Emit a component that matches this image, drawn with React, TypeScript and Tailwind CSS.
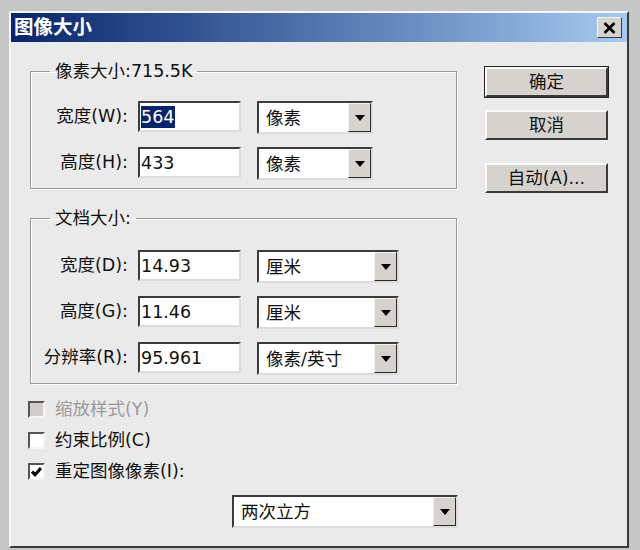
import React from 'react';

const FONT = { fontFamily: '"DejaVu Sans", "Noto Sans CJK SC", sans-serif' };

const Arrow: React.FC = () => (
  <svg width="10" height="6" viewBox="0 0 10 6">
    <path d="M0 0 H10 L5 6 Z" fill="#000" />
  </svg>
);

const TextBox: React.FC<{ value: string; selected?: boolean }> = ({ value, selected }) => (
  <div className="w-[103px] h-[31px] bg-white border-2 border-t-[#3c3c3c] border-l-[#3c3c3c] border-b-[#dcdcdc] border-r-[#dcdcdc] flex items-center pl-[1px] pt-[1px]">
    {selected ? (
      <span className="bg-[#0a246a] text-white leading-[22px] pr-[1px]">{value}</span>
    ) : (
      <span className="text-[#111] leading-[22px]">{value}</span>
    )}
  </div>
);

const Select: React.FC<{ value: string; width: string }> = ({ value, width }) => (
  <div className={`${width} h-[33px] bg-white border-2 border-t-[#3c3c3c] border-l-[#3c3c3c] border-b-[#dcdcdc] border-r-[#dcdcdc] flex`}>
    <div className="flex-1 flex items-center pl-[7px] pt-[2px] text-[#111]">{value}</div>
    <div className="w-[23px] h-full bg-[#d6d3ce] border border-t-[#f2f2f2] border-l-[#f2f2f2] border-r-[#2a2a2a] border-b-[#2a2a2a] flex items-center justify-center">
      <Arrow />
    </div>
  </div>
);

const Row: React.FC<{ label: string; value: string; unit: string; selWidth: string; selected?: boolean }> = ({
  label,
  value,
  unit,
  selWidth,
  selected,
}) => (
  <div className="flex items-center h-[31px]">
    <div className="w-[98px] text-right pr-[1px] text-[#111] whitespace-nowrap">{label}</div>
    <div className="ml-[9px]">
      <TextBox value={value} selected={selected} />
    </div>
    <div className="ml-[16px] mt-[2px]">
      <Select value={unit} width={selWidth} />
    </div>
  </div>
);

const Button: React.FC<{ label: string; isDefault?: boolean }> = ({ label, isDefault }) => (
  <button
    className={`w-[123px] h-[30px] bg-[#d6d3ce] border-2 border-t-[#fafafa] border-l-[#fafafa] border-r-[#3a3a3a] border-b-[#3a3a3a] text-[#111] flex items-center justify-center pt-[1px] ${
      isDefault ? 'outline outline-1 outline-[#222]' : ''
    }`}
  >
    {label}
  </button>
);

const CheckBox: React.FC<{ label: string; checked?: boolean; disabled?: boolean }> = ({ label, checked, disabled }) => (
  <div className="flex items-center h-[17px]">
    <div
      className={`w-[17px] h-[17px] border-2 border-t-[#555] border-l-[#555] border-b-[#f4f4f4] border-r-[#f4f4f4] flex items-center justify-center ${
        disabled ? 'bg-[#d0cdc8]' : 'bg-white'
      }`}
    >
      {checked && (
        <svg width="11" height="10" viewBox="0 0 11 10">
          <path d="M1 4.5 L4 7.8 L10 1" stroke="#000" strokeWidth="3" fill="none" />
        </svg>
      )}
    </div>
    <span className={`ml-[10px] ${disabled ? 'text-[#9a9a9a]' : 'text-[#111]'}`}>{label}</span>
  </div>
);

export default function App() {
  return (
    <div className="w-[640px] h-[550px] bg-[#c6c6c6] pl-[9px] pt-[11px]" style={FONT}>
      <div className="w-[620px] h-[537px] bg-[#ebeaeb] border-2 border-t-[#f6f6f6] border-l-[#f6f6f6] border-r-[#3a3a3a] border-b-[#3a3a3a] text-[17.5px]">
        <div className="h-[29px] bg-gradient-to-r from-[#0a246a] to-[#a6caf0] flex items-center justify-between pl-[3px] pr-[5px]">
          <span className="text-white font-bold text-[19.5px] leading-none">图像大小</span>
          <div className="w-[25px] h-[21px] bg-[#d6d3ce] border border-t-[#f4f4f4] border-l-[#f4f4f4] border-r-[#3a3a3a] border-b-[#3a3a3a] flex items-center justify-center">
            <svg width="13" height="12" viewBox="0 0 13 12">
              <path d="M1.5 1 L11.5 11 M11.5 1 L1.5 11" stroke="#000" strokeWidth="2.6" />
            </svg>
          </div>
        </div>

        <div className="flex pl-[17px]">
          <div className="w-[429px]">
            <fieldset className="ml-[2px] mt-[18px] w-[427px] border border-[#9a9a9a] shadow-[inset_1px_1px_0_#fff,1px_1px_0_#fff] pl-0 pt-[19px] pb-[10px]">
              <legend className="ml-[19px] px-[5px] leading-[22px] text-[#111]">像素大小:715.5K</legend>
              <div className="flex flex-col gap-[15px]">
                <Row label="宽度(W):" value="564" unit="像素" selWidth="w-[116px]" selected />
                <Row label="高度(H):" value="433" unit="像素" selWidth="w-[116px]" />
              </div>
            </fieldset>

            <fieldset className="ml-[2px] mt-[18px] w-[427px] border border-[#9a9a9a] shadow-[inset_1px_1px_0_#fff,1px_1px_0_#fff] pt-[21px] pb-[10px]">
              <legend className="ml-[19px] px-[5px] leading-[22px] text-[#111]">文档大小:</legend>
              <div className="flex flex-col gap-[15px]">
                <Row label="宽度(D):" value="14.93" unit="厘米" selWidth="w-[142px]" />
                <Row label="高度(G):" value="11.46" unit="厘米" selWidth="w-[142px]" />
                <Row label="分辨率(R):" value="95.961" unit="像素/英寸" selWidth="w-[142px]" />
              </div>
            </fieldset>

            <div className="mt-[17px] flex flex-col gap-[14px]">
              <CheckBox label="缩放样式(Y)" disabled />
              <CheckBox label="约束比例(C)" />
              <CheckBox label="重定图像像素(I):" checked />
            </div>

            <div className="ml-[204px] mt-[15px]">
              <Select value="两次立方" width="w-[226px]" />
            </div>
          </div>

          <div className="ml-[28px] mt-[25px] flex flex-col">
            <Button label="确定" isDefault />
            <div className="mt-[13px]">
              <Button label="取消" />
            </div>
            <div className="mt-[23px]">
              <Button label="自动(A)..." />
            </div>
          </div>
        </div>
      </div>
    </div>
  );
}
